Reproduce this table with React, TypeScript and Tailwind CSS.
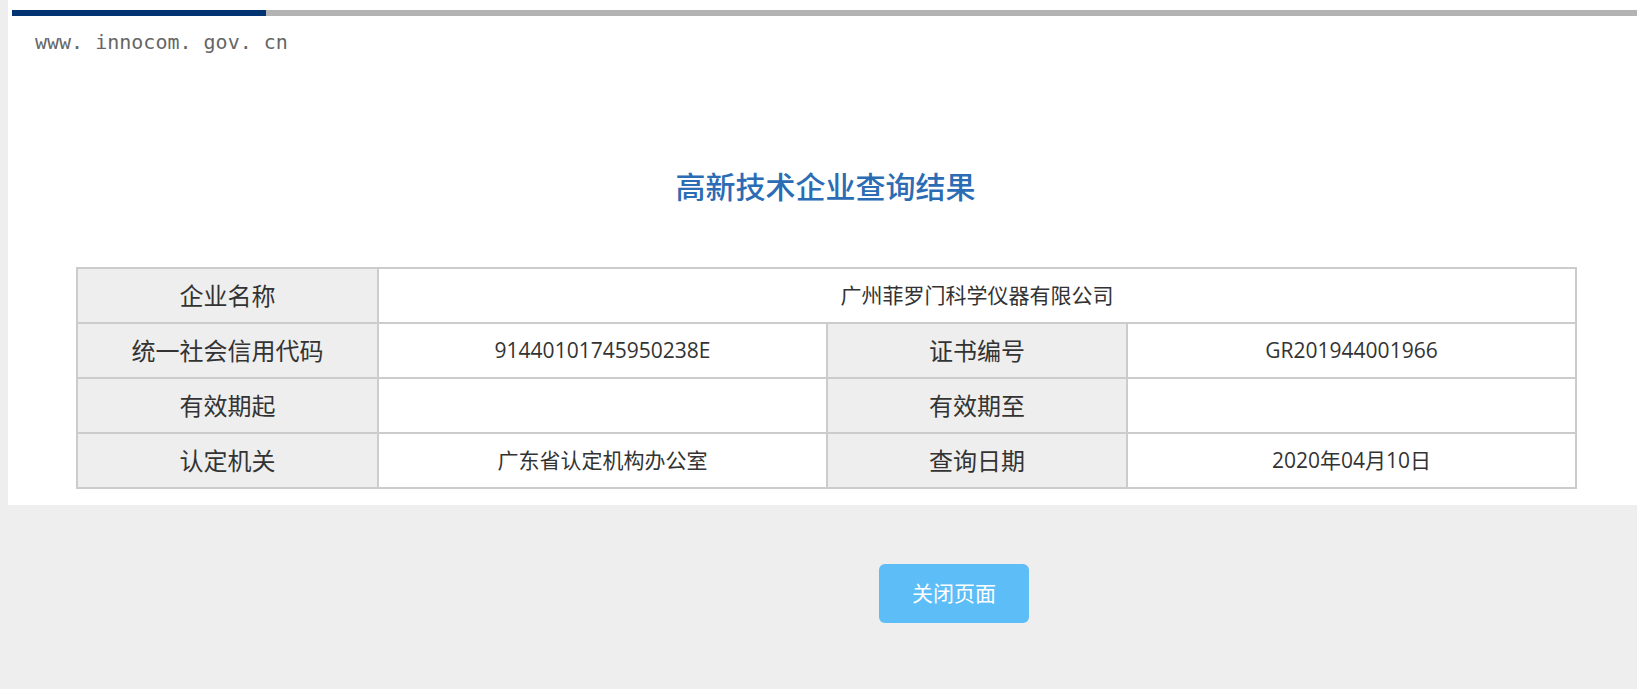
import React from "react";

const rows = [
  { label: "企业名称", value: "广州菲罗门科学仪器有限公司", full: true },
  {
    label: "统一社会信用代码",
    value: "91440101745950238E",
    label2: "证书编号",
    value2: "GR201944001966",
  },
  { label: "有效期起", value: "", label2: "有效期至", value2: "" },
  {
    label: "认定机关",
    value: "广东省认定机构办公室",
    label2: "查询日期",
    value2: "2020年04月10日",
  },
];

const labelCls =
  "border-2 border-[#cccccc] bg-[#eeeeee] text-center text-[24px] text-[#333333] h-[55px] p-0 font-normal";
const valueCls =
  "border-2 border-[#cccccc] bg-white text-center text-[21px] text-[#333333] h-[55px] p-0";

export default function App() {
  return (
    <div className="min-h-screen bg-[#eeeeee] font-['Open_Sans','Noto_Sans_CJK_SC',sans-serif]">
      {/* White panel */}
      <div className="ml-[8px] bg-white pb-[16px]">
        {/* Top bar */}
        <div className="flex pt-[10px] pl-[4px]">
          <div className="h-[6px] w-[254px] bg-[#023474]" />
          <div className="h-[6px] flex-1 bg-[#b3b3b3]" />
        </div>

        {/* Site address */}
        <div className="mt-[16px] ml-[27px] font-['DejaVu_Sans_Mono',monospace] text-[20px] leading-[20px] text-[#666666]">
          www. innocom. gov. cn
        </div>

        <div className="ml-[68px] w-[1499px]">
          {/* Title */}
          <h1 className="mt-[120px] text-center text-[30px] leading-[30px] font-medium text-[#2b6cb5]">
            高新技术企业查询结果
          </h1>

          {/* Result table */}
          <table className="mt-[65px] w-full table-fixed border-collapse">
            <colgroup>
              <col className="w-[301px]" />
              <col className="w-[449px]" />
              <col className="w-[300px]" />
              <col className="w-[449px]" />
            </colgroup>
            <tbody>
              {rows.map((row, i) =>
                row.full ? (
                  <tr key={i}>
                    <th className={labelCls}>{row.label}</th>
                    <td className={valueCls} colSpan={3}>
                      {row.value}
                    </td>
                  </tr>
                ) : (
                  <tr key={i}>
                    <th className={labelCls}>{row.label}</th>
                    <td className={valueCls}>{row.value}</td>
                    <th className={labelCls}>{row.label2}</th>
                    <td className={valueCls}>{row.value2}</td>
                  </tr>
                )
              )}
            </tbody>
          </table>
        </div>
      </div>

      {/* Close button */}
      <button className="mt-[59px] ml-[879px] h-[59px] w-[150px] rounded-md bg-[#5dbdf7] text-[21px] text-white">
        关闭页面
      </button>
    </div>
  );
}
